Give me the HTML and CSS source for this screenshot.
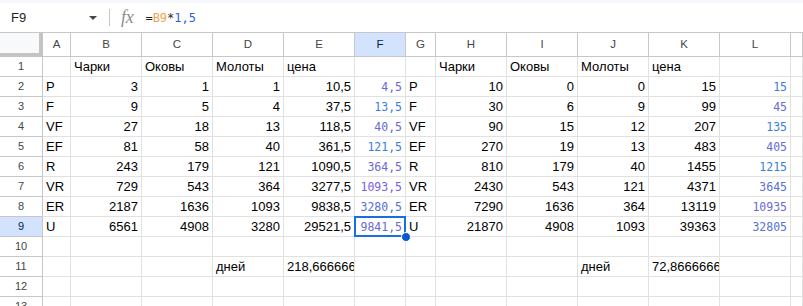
FILE: index.html
```html
<!DOCTYPE html>
<html>
<head>
<meta charset="utf-8">
<link rel="stylesheet" href="styles.css">
</head>
<body>
<div class="strip"></div>
<div class="fbar">
  <div class="namebox">F9</div>
  <div class="caret"></div>
  <div class="sep"></div>
  <div class="fx">fx</div>
  <div class="formula"><span class="op">=</span><span class="ref">B9</span><span class="op">*</span><span class="num">1,5</span></div>
</div>
<div class="sheet">
  <div class="row head">
    <div class="corner"></div>
    <div class="ch">A</div><div class="ch">B</div><div class="ch">C</div><div class="ch">D</div><div class="ch">E</div><div class="ch sel">F</div><div class="ch">G</div><div class="ch">H</div><div class="ch">I</div><div class="ch">J</div><div class="ch">K</div><div class="ch">L</div><div class="ch"></div>
  </div>
  <div class="row">
    <div class="rh">1</div>
    <div class="c"></div><div class="c">Чарки</div><div class="c">Оковы</div><div class="c">Молоты</div><div class="c">цена</div><div class="c"></div><div class="c"></div><div class="c">Чарки</div><div class="c">Оковы</div><div class="c">Молоты</div><div class="c">цена</div><div class="c"></div><div class="c"></div>
  </div>
  <div class="row">
    <div class="rh">2</div>
    <div class="c">P</div><div class="c n">3</div><div class="c n">1</div><div class="c n">1</div><div class="c n">10,5</div><div class="c m v1">4,5</div><div class="c">P</div><div class="c n">10</div><div class="c n">0</div><div class="c n">0</div><div class="c n">15</div><div class="c m v2">15</div><div class="c"></div>
  </div>
  <div class="row">
    <div class="rh">3</div>
    <div class="c">F</div><div class="c n">9</div><div class="c n">5</div><div class="c n">4</div><div class="c n">37,5</div><div class="c m v2">13,5</div><div class="c">F</div><div class="c n">30</div><div class="c n">6</div><div class="c n">9</div><div class="c n">99</div><div class="c m v1">45</div><div class="c"></div>
  </div>
  <div class="row">
    <div class="rh">4</div>
    <div class="c">VF</div><div class="c n">27</div><div class="c n">18</div><div class="c n">13</div><div class="c n">118,5</div><div class="c m v1">40,5</div><div class="c">VF</div><div class="c n">90</div><div class="c n">15</div><div class="c n">12</div><div class="c n">207</div><div class="c m v2">135</div><div class="c"></div>
  </div>
  <div class="row">
    <div class="rh">5</div>
    <div class="c">EF</div><div class="c n">81</div><div class="c n">58</div><div class="c n">40</div><div class="c n">361,5</div><div class="c m v2">121,5</div><div class="c">EF</div><div class="c n">270</div><div class="c n">19</div><div class="c n">13</div><div class="c n">483</div><div class="c m v1">405</div><div class="c"></div>
  </div>
  <div class="row">
    <div class="rh">6</div>
    <div class="c">R</div><div class="c n">243</div><div class="c n">179</div><div class="c n">121</div><div class="c n">1090,5</div><div class="c m v1">364,5</div><div class="c">R</div><div class="c n">810</div><div class="c n">179</div><div class="c n">40</div><div class="c n">1455</div><div class="c m v2">1215</div><div class="c"></div>
  </div>
  <div class="row">
    <div class="rh">7</div>
    <div class="c">VR</div><div class="c n">729</div><div class="c n">543</div><div class="c n">364</div><div class="c n">3277,5</div><div class="c m v4">1093,5</div><div class="c">VR</div><div class="c n">2430</div><div class="c n">543</div><div class="c n">121</div><div class="c n">4371</div><div class="c m v3">3645</div><div class="c"></div>
  </div>
  <div class="row">
    <div class="rh">8</div>
    <div class="c">ER</div><div class="c n">2187</div><div class="c n">1636</div><div class="c n">1093</div><div class="c n">9838,5</div><div class="c m v3">3280,5</div><div class="c">ER</div><div class="c n">7290</div><div class="c n">1636</div><div class="c n">364</div><div class="c n">13119</div><div class="c m v1">10935</div><div class="c"></div>
  </div>
  <div class="row">
    <div class="rh sel">9</div>
    <div class="c">U</div><div class="c n">6561</div><div class="c n">4908</div><div class="c n">3280</div><div class="c n">29521,5</div><div class="c m v1 active">9841,5<span class="handle"></span></div><div class="c">U</div><div class="c n">21870</div><div class="c n">4908</div><div class="c n">1093</div><div class="c n">39363</div><div class="c m v3">32805</div><div class="c"></div>
  </div>
  <div class="row">
    <div class="rh">10</div>
    <div class="c"></div><div class="c"></div><div class="c"></div><div class="c"></div><div class="c"></div><div class="c"></div><div class="c"></div><div class="c"></div><div class="c"></div><div class="c"></div><div class="c"></div><div class="c"></div><div class="c"></div>
  </div>
  <div class="row">
    <div class="rh">11</div>
    <div class="c"></div><div class="c"></div><div class="c"></div><div class="c">дней</div><div class="c">218,6666667</div><div class="c"></div><div class="c"></div><div class="c"></div><div class="c"></div><div class="c">дней</div><div class="c">72,86666667</div><div class="c"></div><div class="c"></div>
  </div>
  <div class="row">
    <div class="rh">12</div>
    <div class="c"></div><div class="c"></div><div class="c"></div><div class="c"></div><div class="c"></div><div class="c"></div><div class="c"></div><div class="c"></div><div class="c"></div><div class="c"></div><div class="c"></div><div class="c"></div><div class="c"></div>
  </div>
  <div class="row">
    <div class="rh">13</div>
    <div class="c"></div><div class="c"></div><div class="c"></div><div class="c"></div><div class="c"></div><div class="c"></div><div class="c"></div><div class="c"></div><div class="c"></div><div class="c"></div><div class="c"></div><div class="c"></div><div class="c"></div>
  </div>
</div>
</body>
</html>
```
FILE: styles.css
```css
html, body {
  margin: 0;
  padding: 0;
  background: #fff;
  overflow: hidden;
  font-family: "Liberation Sans", Arial, sans-serif;
}
.strip {
  height: 3px;
  background: #f6f8fc;
}
.fbar {
  height: 29px;
  border-bottom: 1px solid #c7c7c7;
  display: flex;
  align-items: center;
}
.namebox {
  width: 78px;
  padding-left: 11px;
  font-size: 13px;
  color: #1f1f1f;
}
.caret {
  width: 0;
  height: 0;
  border-left: 4px solid transparent;
  border-right: 4px solid transparent;
  border-top: 4px solid #444746;
  margin-top: 1px;
}
.sep {
  width: 1px;
  height: 17px;
  background: #c7c7c7;
  margin-left: 12px;
}
.fx {
  margin-left: 11px;
  font-family: "Liberation Serif", serif;
  font-style: italic;
  font-size: 18px;
  color: #8a8d91;
  letter-spacing: -0.3px;
}
.formula {
  margin-left: 12px;
  font-family: "DejaVu Sans Mono", monospace;
  font-size: 12px;
  color: #1f1f1f;
  margin-top: 1px;
}
.formula .ref { color: #f4a04e; }
.formula .num { color: #2f5fd0; }

.sheet {
  font-size: 13px;
}
.row {
  display: grid;
  grid-template-columns: 43px 28px 71px 71px 71px 71px 51px 30px 71px 71px 71px 71px 71px 1fr;
  height: 20px;
}
.row.head {
  height: 24px;
}
.corner {
  background: #f8f9fa;
  border-right: 4px solid #c4c4c4;
  border-bottom: 4px solid #c4c4c4;
}
.ch {
  border-right: 1px solid #c7c7c7;
  border-bottom: 1px solid #c7c7c7;
  text-align: center;
  font-size: 11.5px;
  line-height: 23px;
  color: #444746;
}
.ch.sel, .rh.sel {
  background: #d3e3fd;
  color: #041e49;
}
.rh {
  border-right: 1px solid #c7c7c7;
  border-bottom: 1px solid #c7c7c7;
  text-align: center;
  font-size: 11px;
  line-height: 19px;
  color: #444746;
}
.c {
  border-right: 1px solid #e1e1e1;
  border-bottom: 1px solid #e1e1e1;
  padding: 0 3px;
  line-height: 19px;
  white-space: nowrap;
  overflow: hidden;
  color: #000;
}
.n { text-align: right; }
.m {
  text-align: right;
  font-family: "DejaVu Sans Mono", monospace;
  font-size: 11.5px;
  padding-top: 1px;
  line-height: 18px;
}
.v1 { color: #6a6ad6; }
.v2 { color: #3b7ddd; }
.v3 { color: #5570d8; }
.v4 { color: #7a5ee0; }
.active {
  position: relative;
  overflow: visible;
}
.active::after {
  content: "";
  position: absolute;
  left: -1px;
  top: -1px;
  right: -1px;
  bottom: -1px;
  border: 2px solid #1a6fe0;
}
.handle {
  position: absolute;
  right: -6px;
  bottom: -6px;
  width: 8px;
  height: 8px;
  border-radius: 50%;
  background: #0b57d0;
  border: 1px solid #fff;
  z-index: 2;
}
```
